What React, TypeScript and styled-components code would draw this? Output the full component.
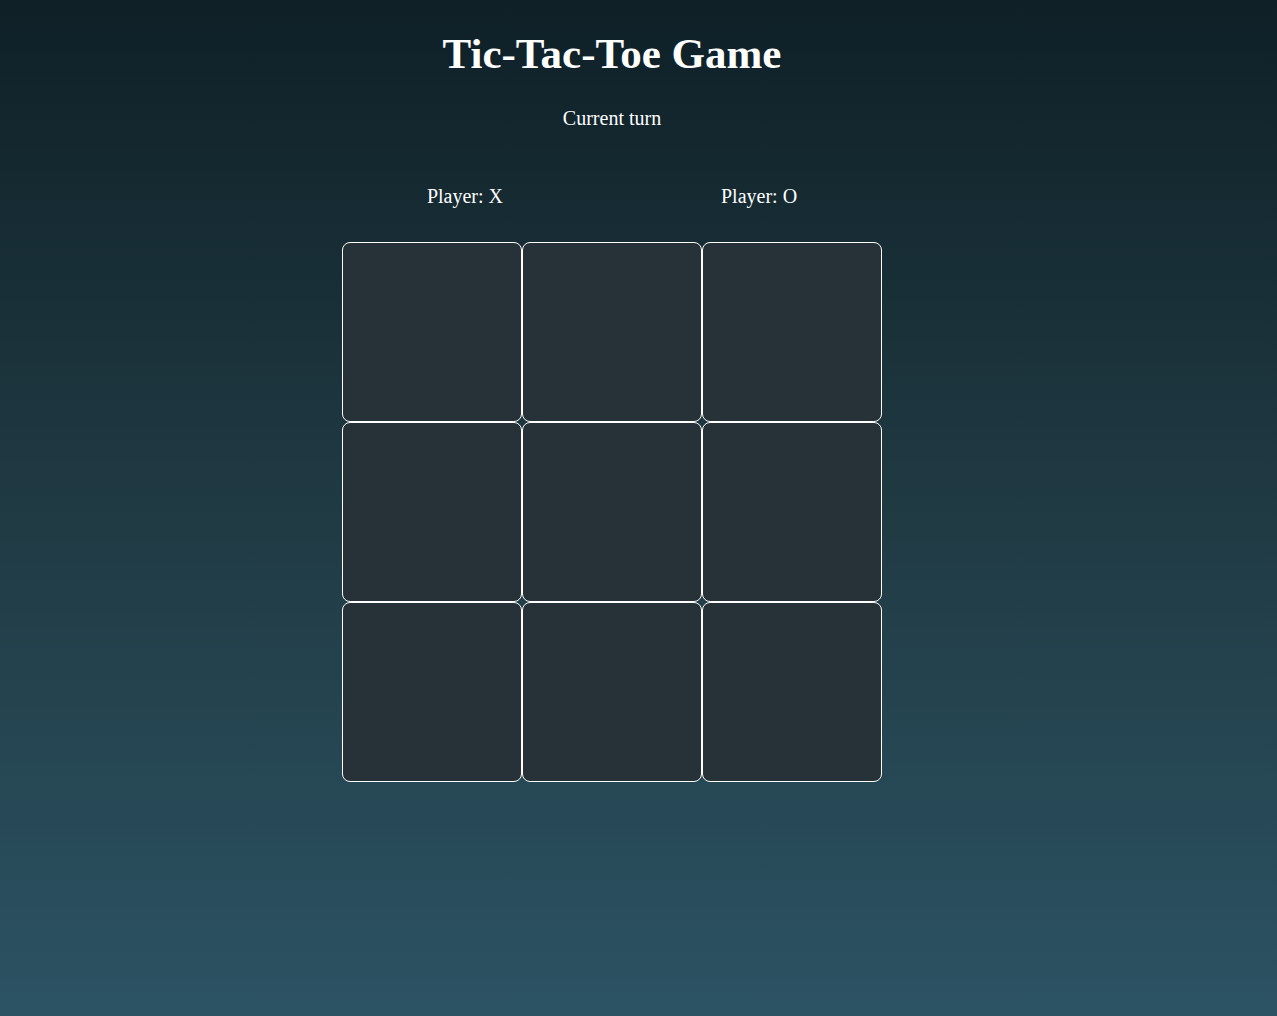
import React, { useState } from 'react';
import styled, { createGlobalStyle } from 'styled-components';

const GlobalStyle = createGlobalStyle`
  html, body {
    margin: 0;
    padding: 0;
    min-height: 100%;
  }
  body {
    font-family: "Liberation Serif", "Times New Roman", serif;
    background: linear-gradient(to bottom, #0f2027, #203a43, #2c5364);
    background-attachment: fixed;
    min-height: 100vh;
    color: #ffffff;
  }
`;

export default function App() {
  const [board, setBoard] = useState<(string | null)[]>(Array(9).fill(null));
  const [xTurn, setXTurn] = useState(true);

  const play = (i: number) => {
    if (board[i]) return;
    const next = board.slice();
    next[i] = xTurn ? 'X' : 'O';
    setBoard(next);
    setXTurn(!xTurn);
  };

  return (
    <>
      <GlobalStyle />
      <Page>
        <Title>Tic-Tac-Toe Game</Title>
        <Turn>Current turn</Turn>
        <Players>
          <Player>Player: X</Player>
          <Player>Player: O</Player>
        </Players>
        <Board>
          {board.map((v, i) => (
            <Cell key={i} onClick={() => play(i)}>
              {v}
            </Cell>
          ))}
        </Board>
      </Page>
    </>
  );
}

const Page = styled.div`
  min-height: 100vh;
  padding: 30px 53px 0 0;
  box-sizing: border-box;
  display: flex;
  flex-direction: column;
  align-items: center;
`;

const Title = styled.h1`
  margin: 0;
  font-size: 43px;
  font-weight: 700;
  line-height: 48px;
`;

const Turn = styled.p`
  margin: 28px 0 0 0;
  font-size: 20px;
  line-height: 24px;
`;

const Players = styled.div`
  display: flex;
  justify-content: center;
  gap: 218px;
  margin-top: 54px;
`;

const Player = styled.span`
  font-size: 20px;
  line-height: 24px;
`;

const Board = styled.div`
  display: grid;
  grid-template-columns: repeat(3, 180px);
  grid-template-rows: repeat(3, 180px);
  margin-top: 34px;
`;

const Cell = styled.div`
  box-sizing: border-box;
  background: #263238;
  border: 1px solid #ffffff;
  border-radius: 8px;
  display: flex;
  align-items: center;
  justify-content: center;
  font-size: 72px;
  font-weight: 700;
  cursor: pointer;
`;
